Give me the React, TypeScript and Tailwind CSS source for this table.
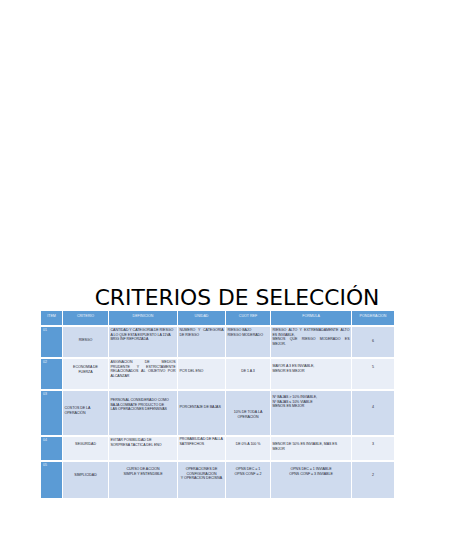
import { Fragment } from "react";

type Cell = {
  text: React.ReactNode;
  align?: "left" | "center";
  pt: number;
};

type Row = {
  item: string;
  height: number;
  bg: string;
  cells: Cell[];
};

// justified block: lines spread to full width, except the last one and any listed in `plain`
function Justified({ lines, plain = [] }: { lines: string[]; plain?: number[] }) {
  return (
    <>
      {lines.map((l, i) =>
        i < lines.length - 1 && !plain.includes(i) ? (
          <div key={i} className="flex justify-between">
            {l.split(" ").map((w, j) => (
              <span key={j}>{w}</span>
            ))}
          </div>
        ) : (
          <div key={i}>{l}</div>
        )
      )}
    </>
  );
}

const rows: Row[] = [
  {
    item: "01",
    height: 30,
    bg: "bg-[#cfdbee]",
    cells: [
      { text: "RIESGO", align: "center", pt: 11 },
      {
        text: (
          <>
            CANTIDAD Y CATEGORIA DE RIESGO
            <br />A LO QUE ESTA EXPUESTO LA 11VA
            <br />
            BRIG INF REFORZADA
          </>
        ),
        pt: 1,
      },
      {
        text: <Justified lines={["NUMERO Y CATEGORIA", "DE RIESGO"]} />,
        pt: 1,
      },
      {
        text: (
          <>
            RIESGO BAJO
            <br />
            RIESGO MODERADO
          </>
        ),
        pt: 1,
      },
      {
        text: (
          <Justified
            lines={[
              "RIESGO ALTO Y EXTREMADAMENTE ALTO",
              "ES INVIABLE,",
              "MENOS QUE RIESGO MODERADO ES",
              "MEJOR.",
            ]}
            plain={[1]}
          />
        ),
        pt: 1,
      },
      { text: "6", align: "center", pt: 12 },
    ],
  },
  {
    item: "02",
    height: 30,
    bg: "bg-[#e9eef7]",
    cells: [
      {
        text: (
          <>
            ECONOMIA DE
            <br />
            FUERZA
          </>
        ),
        align: "center",
        pt: 6,
      },
      {
        text: (
          <Justified
            lines={[
              "ASIGNACION DE MEDIOS",
              "PRUDENTE Y ESTRICTAMENTE",
              "RELACIONADOS AL OBJETIVO POR",
              "ALCANZAR",
            ]}
          />
        ),
        pt: 1,
      },
      { text: "PCR DEL ENO", pt: 10 },
      { text: "DE 1 A 3", align: "center", pt: 10 },
      {
        text: (
          <>
            MAYOR A 3 ES INVIABLE,
            <br />
            MENOR ES MEJOR
          </>
        ),
        pt: 5,
      },
      { text: "5", align: "center", pt: 6 },
    ],
  },
  {
    item: "03",
    height: 44,
    bg: "bg-[#cfdbee]",
    cells: [
      {
        text: (
          <>
            COSTOS DE LA
            <br />
            OPERACIÓN
          </>
        ),
        pt: 15,
      },
      {
        text: (
          <>
            PERSONAL CONSIDERADO COMO
            <br />
            BAJA COMBATE PRODUCTO DE
            <br />
            LAS OPERACIONES DEFENSIVAS
          </>
        ),
        pt: 7,
      },
      { text: "PORCENTAJE DE BAJAS", pt: 14 },
      {
        text: (
          <>
            10% DE TODA LA
            <br />
            OPERACIÓN
          </>
        ),
        align: "center",
        pt: 19,
      },
      {
        text: (
          <>
            Nº BAJAS &gt; 10% INVIABLE,
            <br />
            Nº BAJAS ≤ 10% VIABLE
            <br />
            MENOS ES MEJOR
          </>
        ),
        pt: 4,
      },
      { text: "4", align: "center", pt: 14 },
    ],
  },
  {
    item: "04",
    height: 23,
    bg: "bg-[#e9eef7]",
    cells: [
      { text: "SEGURIDAD", align: "center", pt: 5 },
      {
        text: (
          <>
            EVITAR POSIBILIDAD DE
            <br />
            SORPRESA TACTICA DEL ENO
          </>
        ),
        pt: 1,
      },
      {
        text: (
          <>
            PROBABILIDAD DE FALLA
            <br />
            SATISFECHOS
          </>
        ),
        pt: 0,
      },
      { text: "DE 0% A 100 %", align: "center", pt: 5 },
      {
        text: (
          <>
            MENOR DE 50% ES INVIABLE, MAS ES
            <br />
            MEJOR
          </>
        ),
        pt: 5,
      },
      { text: "3", align: "center", pt: 5 },
    ],
  },
  {
    item: "05",
    height: 36,
    bg: "bg-[#cfdbee]",
    cells: [
      { text: "SIMPLICIDAD", align: "center", pt: 11 },
      {
        text: (
          <>
            CURSO DE ACCION
            <br />
            SIMPLE Y ENTENDIBLE
          </>
        ),
        align: "center",
        pt: 5,
      },
      {
        text: (
          <>
            OPERACIONES DE
            <br />
            CONFIGURACION
            <br />Y OPERACION DECISIVA
          </>
        ),
        align: "center",
        pt: 5,
      },
      {
        text: (
          <>
            OPNS DEC = 1
            <br />
            OPNS CONF = 2
          </>
        ),
        align: "center",
        pt: 5,
      },
      {
        text: (
          <>
            OPNS DEC = 1 INVIABLE
            <br />
            OPNS CONF = 3 INVIABLE
          </>
        ),
        align: "center",
        pt: 5,
      },
      { text: "2", align: "center", pt: 11 },
    ],
  },
];

const headers = ["ITEM", "CRITERIO", "DEFINICION", "UNIDAD", "CUOT REF", "FORMULA", "PONDERACION"];

export default function App() {
  return (
    <div className="w-[474px] h-[534px] bg-white pt-[287px] overflow-hidden">
      <h1 className="h-[22px] text-center text-[21.8px] leading-[22px] text-black font-['DejaVu_Sans',sans-serif] font-normal">
        CRITERIOS DE SELECCIÓN
      </h1>

      <div className="ml-[41px] mt-[2px] w-[353px] grid grid-cols-[21px_45px_68px_47px_44px_80px_42px] gap-x-px gap-y-[2px] bg-white font-['Liberation_Sans',sans-serif]">
        {headers.map((h) => (
          <div
            key={h}
            className="h-[14px] bg-[#5b9bd5] pt-[3px] text-center text-[3.6px] leading-[4px] text-[#eef4fb] whitespace-nowrap"
          >
            {h}
          </div>
        ))}

        {rows.map((row) => (
          <Fragment key={row.item}>
            <div
              className="bg-[#5b9bd5] pl-[2px] pt-[1px] text-[3.6px] leading-[4px] text-[#e6effa]"
              style={{ height: row.height }}
            >
              {row.item}
            </div>
            {row.cells.map((c, i) => (
              <div
                key={i}
                className={`${row.bg} px-[1.5px] text-[3.6px] leading-[4.5px] tracking-[-0.05px] text-[#1f2633] whitespace-nowrap overflow-hidden ${c.align === "center" ? "text-center" : "text-left"}`}
                style={{ height: row.height, paddingTop: c.pt }}
              >
                {c.text}
              </div>
            ))}
          </Fragment>
        ))}
      </div>
    </div>
  );
}
